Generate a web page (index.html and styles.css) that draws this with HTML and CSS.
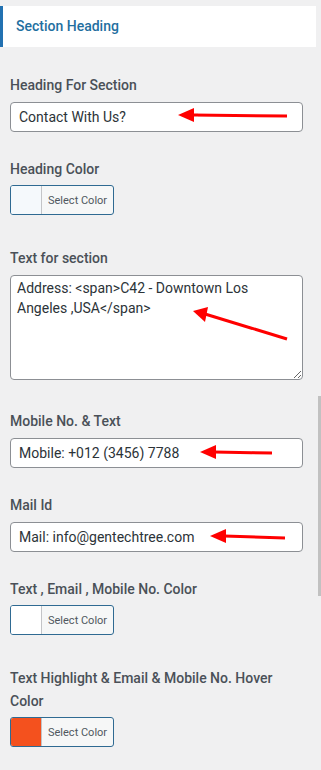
FILE: index.html
```html
<!DOCTYPE html>
<html lang="en">
<head>
  <meta charset="UTF-8">
  <meta name="viewport" content="width=device-width, initial-scale=1.0">
  <title>Section Heading</title>
  <link rel="stylesheet" href="styles.css">
</head>
<body>
  <div class="panel">
    <h3 class="panel-title">Section Heading</h3>

    <div class="field">
      <label class="field-label">Heading For Section</label>
      <div class="input-wrap">
        <input class="text-input" type="text" value="Contact With Us?">
        <svg class="arrow arrow-1" width="120" height="20" viewBox="0 0 120 20">
          <line x1="14" y1="10" x2="109" y2="11" stroke="#f00" stroke-width="3"/>
          <polygon points="0,10 16,3 16,17" fill="#f00"/>
        </svg>
      </div>
    </div>

    <div class="field field-color">
      <label class="field-label">Heading Color</label>
      <button class="color-btn" type="button">
        <span class="swatch swatch-light"></span>
        <span class="color-text">Select Color</span>
      </button>
    </div>

    <div class="field field-area">
      <label class="field-label">Text for section</label>
      <div class="input-wrap">
        <textarea class="text-area">Address: &lt;span&gt;C42 - Downtown Los Angeles ,USA&lt;/span&gt;</textarea>
        <svg class="arrow arrow-2" width="100" height="34" viewBox="0 0 100 34">
          <line x1="12" y1="4" x2="94" y2="29" stroke="#f00" stroke-width="3"/>
          <polygon points="0,1 15,-3 12,12" fill="#f00"/>
        </svg>
      </div>
    </div>

    <div class="field">
      <label class="field-label">Mobile No. &amp; Text</label>
      <div class="input-wrap">
        <input class="text-input" type="text" value="Mobile: +012 (3456) 7788">
        <svg class="arrow arrow-3" width="80" height="20" viewBox="0 0 80 20">
          <line x1="14" y1="10" x2="72" y2="11" stroke="#f00" stroke-width="3"/>
          <polygon points="0,10 16,3 16,17" fill="#f00"/>
        </svg>
      </div>
    </div>

    <div class="field">
      <label class="field-label">Mail Id</label>
      <div class="input-wrap">
        <input class="text-input" type="text" value="Mail: info@gentechtree.com">
        <svg class="arrow arrow-4" width="84" height="20" viewBox="0 0 84 20">
          <line x1="14" y1="9" x2="75" y2="11" stroke="#f00" stroke-width="3"/>
          <polygon points="0,9 16,2 16,16" fill="#f00"/>
        </svg>
      </div>
    </div>

    <div class="field field-color">
      <label class="field-label">Text , Email , Mobile No. Color</label>
      <button class="color-btn" type="button">
        <span class="swatch swatch-white"></span>
        <span class="color-text">Select Color</span>
      </button>
    </div>

    <div class="field field-color">
      <label class="field-label">Text Highlight &amp; Email &amp; Mobile No. Hover Color</label>
      <button class="color-btn" type="button">
        <span class="swatch swatch-orange"></span>
        <span class="color-text">Select Color</span>
      </button>
    </div>
  </div>

  <div class="scrollbar"></div>
</body>
</html>
```

FILE: styles.css
```css
body {
  margin: 0;
  padding: 0;
  background-color: #f0f0f1;
  font-family: Roboto, "Liberation Sans", sans-serif;
  color: #3c434a;
}

.panel {
  width: 316px;
  padding-top: 6px;
}

.panel-title {
  margin: 0 0 27px 0;
  height: 41px;
  background-color: #fff;
  border-left: 3px solid #2271b1;
  padding-left: 13px;
  font-size: 14px;
  font-weight: 500;
  line-height: 40px;
  color: #1f6fa0;
}

.field {
  padding-left: 10px;
  margin-bottom: 26px;
}

.field-color {
  margin-bottom: 32px;
}

.field-area {
  margin-bottom: 30px;
}

.field-label {
  display: block;
  font-size: 14px;
  font-weight: 500;
  line-height: 23px;
  color: #4a5058;
  margin-bottom: 5px;
  padding-right: 10px;
}

.field-color .field-label {
  margin-bottom: 4px;
}

.input-wrap {
  position: relative;
  width: 293px;
}

.text-input {
  display: block;
  box-sizing: border-box;
  width: 293px;
  height: 30px;
  margin: 0;
  padding: 0 8px;
  border: 1px solid #8c8f94;
  border-radius: 4px;
  background-color: #fff;
  font-family: Roboto, "Liberation Sans", sans-serif;
  font-size: 14px;
  color: #2c3338;
}

.text-area {
  display: block;
  box-sizing: border-box;
  width: 293px;
  height: 105px;
  margin: 0;
  padding: 2px 6px;
  border: 1px solid #8c8f94;
  border-radius: 4px;
  background-color: #fff;
  font-family: Roboto, "Liberation Sans", sans-serif;
  font-size: 14px;
  line-height: 20px;
  color: #2c3338;
}

.arrow {
  position: absolute;
  overflow: visible;
}

.arrow-1 {
  left: 168px;
  top: 3px;
}

.arrow-2 {
  left: 183px;
  top: 35px;
}

.arrow-3 {
  left: 190px;
  top: 4px;
}

.arrow-4 {
  left: 200px;
  top: 5px;
}

.color-btn {
  display: flex;
  align-items: stretch;
  box-sizing: border-box;
  width: 104px;
  height: 30px;
  margin: 0;
  padding: 0;
  border: 1px solid #2f6a92;
  border-radius: 3px;
  background-color: #f6f7f7;
  overflow: hidden;
  cursor: pointer;
}

.swatch {
  width: 30px;
  border-right: 1px solid #c3c4c7;
}

.swatch-light {
  background-color: #f5f9fc;
}

.swatch-white {
  background-color: #fff;
}

.swatch-orange {
  background-color: #f4511e;
}

.color-text {
  display: flex;
  align-items: center;
  padding-left: 6px;
  font-family: Roboto, "Liberation Sans", sans-serif;
  font-size: 11px;
  color: #50575e;
}

.scrollbar {
  position: absolute;
  left: 318px;
  top: 396px;
  width: 3px;
  height: 200px;
  background-color: #c1c1c1;
}
```
